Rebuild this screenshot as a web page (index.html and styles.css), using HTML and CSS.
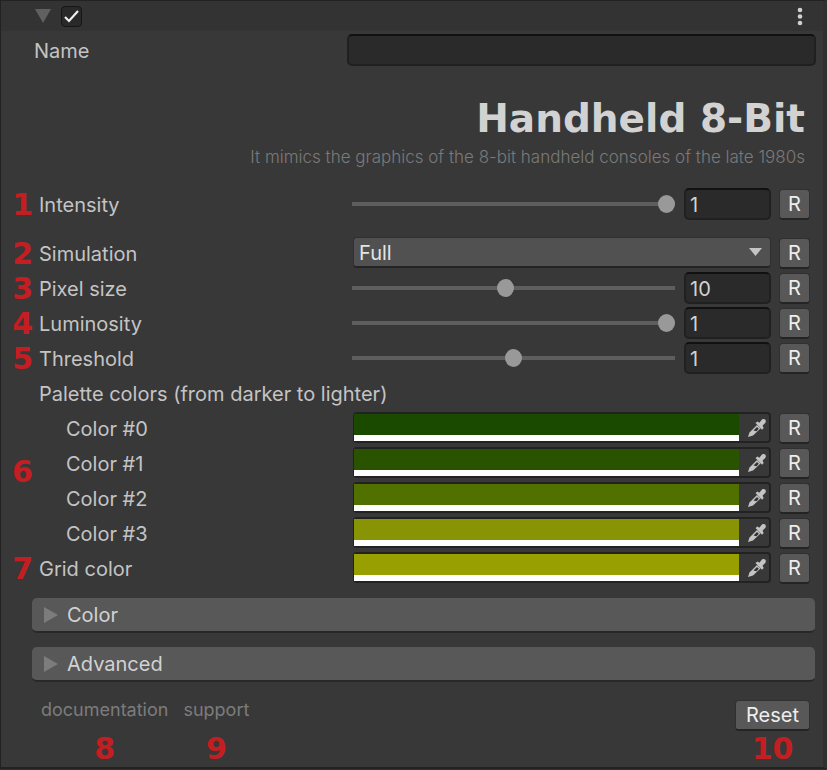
FILE: index.html
```html
<!DOCTYPE html>
<html lang="en">
<head>
<meta charset="utf-8">
<title>Handheld 8-Bit</title>
<link rel="stylesheet" href="styles.css">
</head>
<body>
<svg class="defs" aria-hidden="true">
  <symbol id="picker" viewBox="0 0 20 20">
    <path d="M1 19l1.500-4.500L10 7l3.500 3.500L6 17.500z" fill="#c4c4c4"/>
    <path d="M6.500 12.500L10 9l1.800 1.800L9.500 13.200z" fill="#333"/>
    <path d="M8.500 5l2-1.500 1.800 1.300L15 1.500C16.500.5 19 1 18.800 3.500c0 1-.5 1.500-3.300 4.200l1.200 2.300-1.700 1.800z" fill="#c4c4c4"/>
  </symbol>
</svg>
<main class="panel">
  <header class="bar">
    <button class="fold" aria-label="Collapse"><svg width="16" height="14" viewBox="0 0 16 14"><path d="M0 0h16L8 14z" fill="#606060"/></svg></button>
    <input class="check" type="checkbox" checked aria-label="Enabled">
    <button class="menu" aria-label="More options"><svg width="6" height="20" viewBox="0 0 6 20" fill="#d0d0d0"><circle cx="3" cy="4" r="2.300"/><circle cx="3" cy="10.500" r="2.300"/><circle cx="3" cy="17" r="2.300"/></svg></button>
  </header>
  <div class="name">
    <label for="name">Name</label>
    <input id="name" class="field" type="text">
  </div>
  <div class="heading">
    <h1>Handheld 8-Bit</h1>
    <p>It mimics the graphics of the 8-bit handheld consoles of the late 1980s</p>
  </div>

  <div class="row spaced">
    <span class="num">1</span><label for="intensity">Intensity</label>
    <div class="control"><input id="intensity" type="range" min="0" max="1" step="0.01" value="1"><input class="field" type="text" value="1" aria-label="Intensity value"></div>
    <button class="btn">R</button>
  </div>
  <div class="row">
    <span class="num">2</span><label for="simulation">Simulation</label>
    <div class="control select"><select id="simulation"><option>Full</option></select><svg width="13" height="8" viewBox="0 0 13 8"><path d="M0 0h13L6.500 8z" fill="#c4c4c4"/></svg></div>
    <button class="btn">R</button>
  </div>
  <div class="row">
    <span class="num">3</span><label for="pixel">Pixel size</label>
    <div class="control"><input id="pixel" type="range" min="1" max="20" value="10"><input class="field" type="text" value="10" aria-label="Pixel size value"></div>
    <button class="btn">R</button>
  </div>
  <div class="row">
    <span class="num">4</span><label for="luminosity">Luminosity</label>
    <div class="control"><input id="luminosity" type="range" min="0" max="1" step="0.01" value="1"><input class="field" type="text" value="1" aria-label="Luminosity value"></div>
    <button class="btn">R</button>
  </div>
  <div class="row">
    <span class="num">5</span><label for="threshold">Threshold</label>
    <div class="control"><input id="threshold" type="range" min="0" max="2" step="0.01" value="1"><input class="field" type="text" value="1" aria-label="Threshold value"></div>
    <button class="btn">R</button>
  </div>
  <div class="palette" role="group" aria-labelledby="palette-title">
    <span class="num group-num">6</span>
    <div class="title" id="palette-title">Palette colors (from darker to lighter)</div>
    <div class="row sub">
      <label for="c0">Color #0</label>
      <div class="control color"><input id="c0" type="color" value="#1a4a00"><button aria-label="Pick color 0"><svg width="20" height="20"><use href="#picker"/></svg></button></div>
      <button class="btn">R</button>
    </div>
    <div class="row sub">
      <label for="c1">Color #1</label>
      <div class="control color"><input id="c1" type="color" value="#2a5300"><button aria-label="Pick color 1"><svg width="20" height="20"><use href="#picker"/></svg></button></div>
      <button class="btn">R</button>
    </div>
    <div class="row sub">
      <label for="c2">Color #2</label>
      <div class="control color"><input id="c2" type="color" value="#507000"><button aria-label="Pick color 2"><svg width="20" height="20"><use href="#picker"/></svg></button></div>
      <button class="btn">R</button>
    </div>
    <div class="row sub">
      <label for="c3">Color #3</label>
      <div class="control color"><input id="c3" type="color" value="#899405"><button aria-label="Pick color 3"><svg width="20" height="20"><use href="#picker"/></svg></button></div>
      <button class="btn">R</button>
    </div>
  </div>
  <div class="row">
    <span class="num">7</span><label for="grid">Grid color</label>
    <div class="control color"><input id="grid" type="color" value="#97a000"><button aria-label="Pick grid color"><svg width="20" height="20"><use href="#picker"/></svg></button></div>
    <button class="btn">R</button>
  </div>

  <div class="sections">
    <button class="section" aria-expanded="false"><svg width="14" height="16" viewBox="0 0 14 16"><path d="M0 0l14 8L0 16z" fill="#7c7c7c"/></svg>Color</button>
    <button class="section" aria-expanded="false"><svg width="14" height="16" viewBox="0 0 14 16"><path d="M0 0l14 8L0 16z" fill="#7c7c7c"/></svg>Advanced</button>
  </div>
  <footer class="foot">
    <div class="stack"><a href="#documentation">documentation</a><span class="num">8</span></div>
    <div class="stack"><a href="#support">support</a><span class="num">9</span></div>
    <div class="stack end"><button class="btn reset">Reset</button><span class="num">10</span></div>
  </footer>
</main>
</body>
</html>
```

FILE: styles.css
```css
* { box-sizing: border-box; }

body {
  margin: 0;
  background: #303030;
  color: #c4c4c4;
  font: 20px/24px Inter, sans-serif;
}

button, input, select {
  margin: 0;
  padding: 0;
  border: 0;
  background: none;
  color: inherit;
  font: inherit;
}

.defs { position: absolute; width: 0; height: 0; }

.panel {
  border: 1px solid #222;
  border-right: 4px solid #303030;
  border-bottom: 2px solid #222;
  background: #383838;
}

.bar {
  display: flex;
  align-items: center;
  gap: 10px;
  height: 30px;
  padding: 0 20px 0 34px;
  background: #333;
}

.bar svg { display: block; }
.menu { margin-left: auto; }

.check {
  appearance: none;
  width: 21px;
  height: 21px;
  border: 1px solid #151515;
  border-radius: 4px;
  background: #292929 url("data:image/svg+xml,%3Csvg xmlns='http://www.w3.org/2000/svg' viewBox='0 0 19 19'%3E%3Cpath d='M3 10l4 4 9-10' fill='none' stroke='%23eee' stroke-width='2.200'/%3E%3C/svg%3E") center / 19px 19px;
}

.name {
  display: grid;
  grid-template-columns: 313px 1fr;
  align-items: center;
  padding: 3px 7px 0 33px;
}

label { padding-top: 2px; }

.field {
  min-width: 0;
  height: 32px;
  padding: 2px 4px 0;
  border: 2px solid #202020;
  border-top-color: #111;
  border-radius: 5px;
  background: #2a2a2a;
  color: #d2d2d2;
}

.heading {
  padding: 31px 18px 0 0;
  text-align: right;
}

h1 {
  margin: 0;
  color: #d2d2d2;
  font: bold 39px/44px "DejaVu Sans", sans-serif;
}

p {
  margin: 6px 0 19px;
  color: #7a7a7a;
  font-size: 17px;
  font-weight: 300;
  line-height: 20px;
}

.row {
  display: grid;
  grid-template-columns: 32px 312px 1fr 31px;
  align-items: center;
  height: 35px;
  padding-right: 13px;
}

.spaced { margin-bottom: 14px; }

.row label, .title { padding-left: 6px; }
.title { height: 35px; margin-left: 32px; padding-top: 2px; line-height: 34px; }
.row.sub label { grid-column: 2; padding-left: 33px; }

.num {
  color: #c41e22;
  font: bold 30px/30px "DejaVu Sans", sans-serif;
  text-align: right;
}

.row .num { padding-top: 2px; }

.palette { position: relative; }
.group-num { position: absolute; left: 11px; top: 82px; }

.control {
  display: flex;
  align-items: center;
  gap: 9px;
  margin: 0 8px 0 7px;
}

.control .field { width: 87px; }

input[type="range"] {
  appearance: none;
  flex: 1;
  min-width: 0;
  height: 18px;
}

input[type="range"]::-webkit-slider-runnable-track {
  height: 4px;
  background: #5e5e5e;
}

input[type="range"]::-webkit-slider-thumb {
  appearance: none;
  width: 17px;
  height: 18px;
  margin-top: -7px;
  border-radius: 50%;
  background: #999;
}

.select, .color {
  height: 31px;
  margin-left: 8px;
  border: 1px solid #303030;
  border-radius: 4px;
}

.select {
  padding-right: 8px;
  border-bottom: 2px solid #242424;
  background: #515151;
}

.select select {
  appearance: none;
  flex: 1;
  padding: 2px 0 0 5px;
  color: #e4e4e4;
}

.color {
  gap: 0;
  border: 2px solid #222;
  border-left-width: 1px;
}

.color input {
  appearance: none;
  flex: 1;
  height: 100%;
  border-bottom: 6px solid #fff;
}

.color input::-webkit-color-swatch-wrapper { padding: 0; }
.color input::-webkit-color-swatch { border: 0; border-radius: 0; }

.color button {
  display: grid;
  place-items: center;
  width: 30px;
  padding-left: 6px;
}

.btn {
  height: 31px;
  margin-top: 2px;
  border: 1px solid #303030;
  border-bottom: 2px solid #242424;
  border-radius: 4px;
  background: #585858;
  color: #eee;
}

.sections {
  display: grid;
  gap: 14px;
  padding: 13px 8px 0 31px;
}

.section {
  display: flex;
  align-items: center;
  gap: 9px;
  height: 35px;
  padding-left: 12px;
  border-bottom: 2px solid #282828;
  border-radius: 5px;
  background: #585858;
  color: #d2d2d2;
}

.foot {
  display: flex;
  gap: 15px;
  padding: 16px 13px 3px 40px;
}

.stack {
  display: grid;
  grid-template-rows: 36px 30px;
  justify-items: center;
}

.end { margin-left: auto; }

.foot a {
  color: #7c7c7c;
  font-size: 18px;
  text-decoration: none;
}

.reset { width: 75px; }
```
